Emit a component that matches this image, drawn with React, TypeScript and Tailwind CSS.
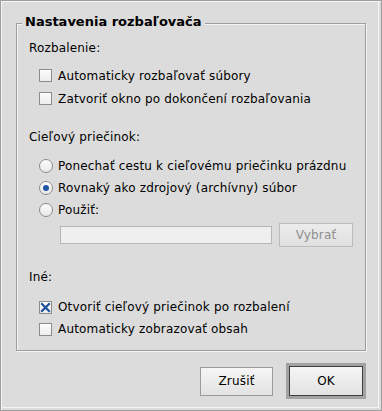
import React from "react";

const font = { fontFamily: '"DejaVu Sans", Verdana, sans-serif' };

function CheckBox({ checked }: { checked?: boolean }) {
  return (
    <div className="w-[13px] h-[13px] shrink-0 border border-[#8c8c8c] bg-gradient-to-b from-[#fdfdfd] to-[#ededed] flex items-center justify-center">
      {checked && (
        <svg width="11" height="11" viewBox="0 0 11 11">
          <path d="M2 2 L9 9 M9 2 L2 9" stroke="#1f4f99" strokeWidth="2.2" strokeLinecap="square" />
        </svg>
      )}
    </div>
  );
}

function Radio({ checked }: { checked?: boolean }) {
  return (
    <div className="w-[14px] h-[14px] shrink-0 rounded-full border border-[#8c8c8c] bg-gradient-to-b from-[#fdfdfd] to-[#e8e8e8] flex items-center justify-center">
      {checked && <div className="w-[6px] h-[6px] rounded-full bg-[#1d56a3]" />}
    </div>
  );
}

function CheckRow({ label, checked, h }: { label: string; checked?: boolean; h: string }) {
  return (
    <div className={`flex items-center ml-[10px] gap-[6px] ${h}`}>
      <CheckBox checked={checked} />
      <span>{label}</span>
    </div>
  );
}

function RadioRow({ label, checked }: { label: string; checked?: boolean }) {
  return (
    <div className="flex items-center ml-[10px] gap-[5px] h-[22px]">
      <Radio checked={checked} />
      <span>{label}</span>
    </div>
  );
}

export default function App() {
  return (
    <div
      className="w-[382px] h-[411px] bg-[#dcdcdc] border border-[#9e9e9e] shadow-[inset_1px_1px_0_#f4f4f4,inset_-2px_-2px_0_#dcdcdc,inset_-3px_-3px_0_#f4f4f4] text-[12px] tracking-[0.17px] text-black leading-[16px] flex flex-col"
      style={font}
    >
      <div className="relative ml-[15px] mt-[22px] w-[350px] h-[328px] border border-[#9e9e9e] shadow-[inset_1px_1px_0_#f4f4f4,1px_1px_0_#f4f4f4] pl-[12px] pt-[14px] flex flex-col">
        <span className="absolute top-[-10px] left-[5px] px-[3px] bg-[#dcdcdc] font-bold text-[13px] tracking-normal">
          Nastavenia rozbaľovača
        </span>
        <div className="h-[20px] flex items-center">Rozbalenie:</div>
        <div className="mt-[6px]" />
        <CheckRow h="h-[23px]" label="Automaticky rozbaľovať súbory" />
        <CheckRow h="h-[23px]" label="Zatvoriť okno po dokončení rozbaľovania" />
        <div className="mt-[17px] h-[20px] flex items-center">Cieľový priečinok:</div>
        <div className="mt-[8px]" />
        <RadioRow label="Ponechať cestu k cieľovému priečinku prázdnu" />
        <RadioRow label="Rovnaký ako zdrojový (archívny) súbor" checked />
        <RadioRow label="Použiť:" />
        <div className="mt-[2px] h-[24px] flex items-center ml-[31px] gap-[7px]">
          <div className="w-[212px] h-[18px] bg-[#efefef] border border-[#b6b6b6]" />
          <div className="w-[74px] h-[24px] border border-[#bcbcbc] bg-gradient-to-b from-[#ececec] to-[#e0e0e0] flex items-center justify-center text-[#8e8e8e]">
            Vybrať
          </div>
        </div>
        <div className="mt-[20px] h-[20px] flex items-center">Iné:</div>
        <div className="mt-[9px]" />
        <CheckRow h="h-[22px]" label="Otvoriť cieľový priečinok po rozbalení" checked />
        <CheckRow h="h-[22px]" label="Automaticky zobrazovať obsah" />
      </div>
      <div className="mt-[12px] h-[36px] flex items-center justify-end pr-[15px] gap-[13px]">
        <div className="w-[73px] h-[29px] border border-[#9a9a9a] bg-gradient-to-b from-[#f6f6f6] to-[#e2e2e2] flex items-center justify-center">
          Zrušiť
        </div>
        <div className="w-[80px] h-[36px] border-[3px] border-[#a2a2a2] flex">
          <div className="flex-1 border border-[#3e3e3e] bg-gradient-to-b from-[#f6f6f6] to-[#e2e2e2] flex items-center justify-center">
            OK
          </div>
        </div>
      </div>
    </div>
  );
}
